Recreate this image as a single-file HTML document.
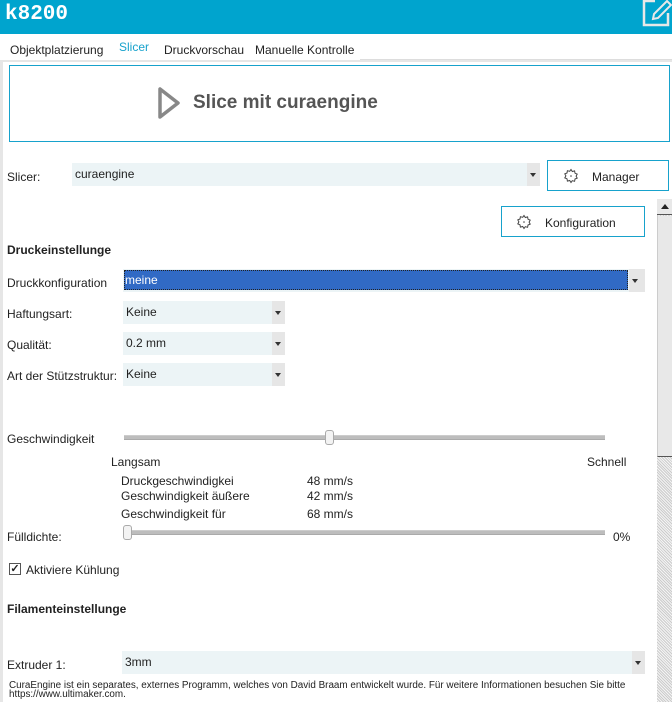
<!DOCTYPE html>
<html><head><meta charset="utf-8"><style>
*{box-sizing:border-box;margin:0;padding:0}
body{width:672px;height:702px;overflow:hidden;background:#fff;font-family:"Liberation Sans",sans-serif;color:#222;position:relative;font-size:12px}
.a{position:absolute;white-space:nowrap}
.sel{position:absolute;background:#ecf4f6;height:23px}
.sel .t{position:absolute;left:3px;top:4px;font-size:12px}
.sel .b{position:absolute;right:0;top:0;width:13px;height:23px;background:#e6e6e6}
.sel .b:after{content:"";position:absolute;left:3px;top:10px;border-left:3.5px solid transparent;border-right:3.5px solid transparent;border-top:4px solid #333}
.track{position:absolute;height:5px;background:#bdbdbd;border-top:1px solid #ccc;border-bottom:1px solid #aaa}
.knob{position:absolute;width:9px;height:15px;background:#f3f3f3;border:1px solid #aaa;border-radius:3px}
.btn{position:absolute;border:1px solid #17a2cc;background:#fff;font-size:12px}
</style></head><body>
<div class="a" style="left:0;top:0;width:672px;height:34px;background:#00a4ce"></div>
<div class="a" style="left:5px;top:3px;color:#fff;font-family:'Liberation Mono',monospace;font-weight:bold;font-size:21px">k8200</div>
<svg class="a" style="left:641px;top:0" width="31" height="27" viewBox="0 0 31 27"><path d="M14 1H3v24h24V13" fill="none" stroke="#e8e8e8" stroke-width="2.5"/><path d="M12 19l1-5L26 1l4 4-13 13z" fill="none" stroke="#e8e8e8" stroke-width="2"/></svg>
<div class="a" style="left:10px;top:43px">Objektplatzierung</div>
<div class="a" style="left:119px;top:40px;color:#17a2cc">Slicer</div>
<div class="a" style="left:164px;top:43px">Druckvorschau</div>
<div class="a" style="left:255px;top:43px">Manuelle Kontrolle</div>
<div class="a" style="left:360px;top:59px;width:312px;height:1px;background:#ddd"></div>
<div class="a" style="left:0;top:60px;width:672px;height:2px;background:#e6e6e6"></div>
<div class="a" style="left:0;top:62px;width:3px;height:640px;background:#e6e6e6"></div>
<div class="a" style="left:9px;top:65px;width:661px;height:77px;border:1px solid #17a2cc"></div>
<svg class="a" style="left:157px;top:86px" width="25" height="34" viewBox="0 0 25 34"><path d="M3 3v28L21 17z" fill="none" stroke="#888" stroke-width="3.5" stroke-linejoin="round"/></svg>
<div class="a" style="left:193px;top:92px;font-size:19px;font-weight:bold;color:#555">Slice mit curaengine</div>
<div class="a" style="left:7px;top:170px">Slicer:</div>
<div class="sel" style="left:72px;top:163px;width:468px"><span class="t">curaengine</span><span class="b"></span></div>
<svg width="0" height="0" style="position:absolute"><defs><g id="g"><path d="M8 1.5l1.3 2 2.3-.6.4 2.3 2.2.9-1.1 2 1.1 2-2.2.9-.4 2.3-2.3-.6L8 14.5l-1.3-2-2.3.6-.4-2.3-2.2-.9 1.1-2-1.1-2 2.2-.9.4-2.3 2.3.6z" fill="none" stroke="#444" stroke-width="1"/><circle cx="8" cy="8" r="0.8" fill="#444"/></g></defs></svg>
<div class="btn" style="left:547px;top:160px;width:122px;height:31px"><svg class="a" style="left:15px;top:7px" width="16" height="16"><use href="#g"/></svg><span class="a" style="left:44px;top:9px">Manager</span></div>
<div class="btn" style="left:501px;top:206px;width:144px;height:31px"><svg class="a" style="left:14px;top:7px" width="16" height="16"><use href="#g"/></svg><span class="a" style="left:43px;top:9px">Konfiguration</span></div>
<div class="a" style="left:657px;top:199px;width:15px;height:503px;background:repeating-linear-gradient(45deg,#ccc 0 1px,#f4f4f4 1px 2px)"></div>
<div class="a" style="left:657px;top:199px;width:15px;height:16px;background:#e8e8e8;border-bottom:1px solid #555"></div>
<div class="a" style="left:661px;top:204px;border-left:4px solid transparent;border-right:4px solid transparent;border-bottom:5px solid #222"></div>
<div class="a" style="left:657px;top:216px;width:15px;height:241px;background:#e8e8e8;border-bottom:1px solid #555;border-left:1px solid #ccc"></div>
<div class="a" style="left:7px;top:243px;font-weight:bold">Druckeinstellunge</div>
<div class="a" style="left:7px;top:276px">Druckkonfiguration</div>
<div class="sel" style="left:123px;top:269px;width:522px"><span class="a" style="left:1px;top:1px;width:504px;height:20px;background:#316ac5;border:1px dotted #222"></span><span class="t" style="color:#fff;left:2px">meine</span><span class="b" style="width:16px"></span></div>
<div class="a" style="left:7px;top:307px">Haftungsart:</div>
<div class="sel" style="left:123px;top:301px;width:162px"><span class="t">Keine</span><span class="b"></span></div>
<div class="a" style="left:7px;top:338px">Qualität:</div>
<div class="sel" style="left:123px;top:332px;width:162px"><span class="t">0.2 mm</span><span class="b"></span></div>
<div class="a" style="left:7px;top:369px">Art der Stützstruktur:</div>
<div class="sel" style="left:123px;top:363px;width:162px"><span class="t">Keine</span><span class="b"></span></div>
<div class="a" style="left:7px;top:432px">Geschwindigkeit</div>
<div class="track" style="left:124px;top:435px;width:481px"></div>
<div class="knob" style="left:325px;top:430px"></div>
<div class="a" style="left:111px;top:455px">Langsam</div>
<div class="a" style="left:587px;top:455px">Schnell</div>
<div class="a" style="left:121px;top:474px">Druckgeschwindigkei</div>
<div class="a" style="left:307px;top:474px">48 mm/s</div>
<div class="a" style="left:121px;top:489px">Geschwindigkeit äußere</div>
<div class="a" style="left:307px;top:489px">42 mm/s</div>
<div class="a" style="left:121px;top:507px">Geschwindigkeit für</div>
<div class="a" style="left:307px;top:507px">68 mm/s</div>
<div class="a" style="left:7px;top:530px">Fülldichte:</div>
<div class="track" style="left:124px;top:530px;width:481px"></div>
<div class="knob" style="left:123px;top:525px"></div>
<div class="a" style="left:613px;top:530px">0%</div>
<div class="a" style="left:9px;top:563px;width:12px;height:12px;border:1px solid #555;background:#fff;font-size:11px;line-height:10px;text-align:center;font-weight:bold">✓</div>
<div class="a" style="left:26px;top:563px">Aktiviere Kühlung</div>
<div class="a" style="left:7px;top:602px;font-weight:bold">Filamenteinstellunge</div>
<div class="a" style="left:7px;top:658px">Extruder 1:</div>
<div class="sel" style="left:122px;top:651px;width:523px"><span class="t">3mm</span><span class="b"></span></div>
<div class="a" style="left:9px;top:681px;font-size:9.9px;line-height:9px;color:#222">CuraEngine ist ein separates, externes Programm, welches von David Braam entwickelt wurde. Für weitere Informationen besuchen Sie bitte<br>https://www.ultimaker.com.</div>
</body></html>
